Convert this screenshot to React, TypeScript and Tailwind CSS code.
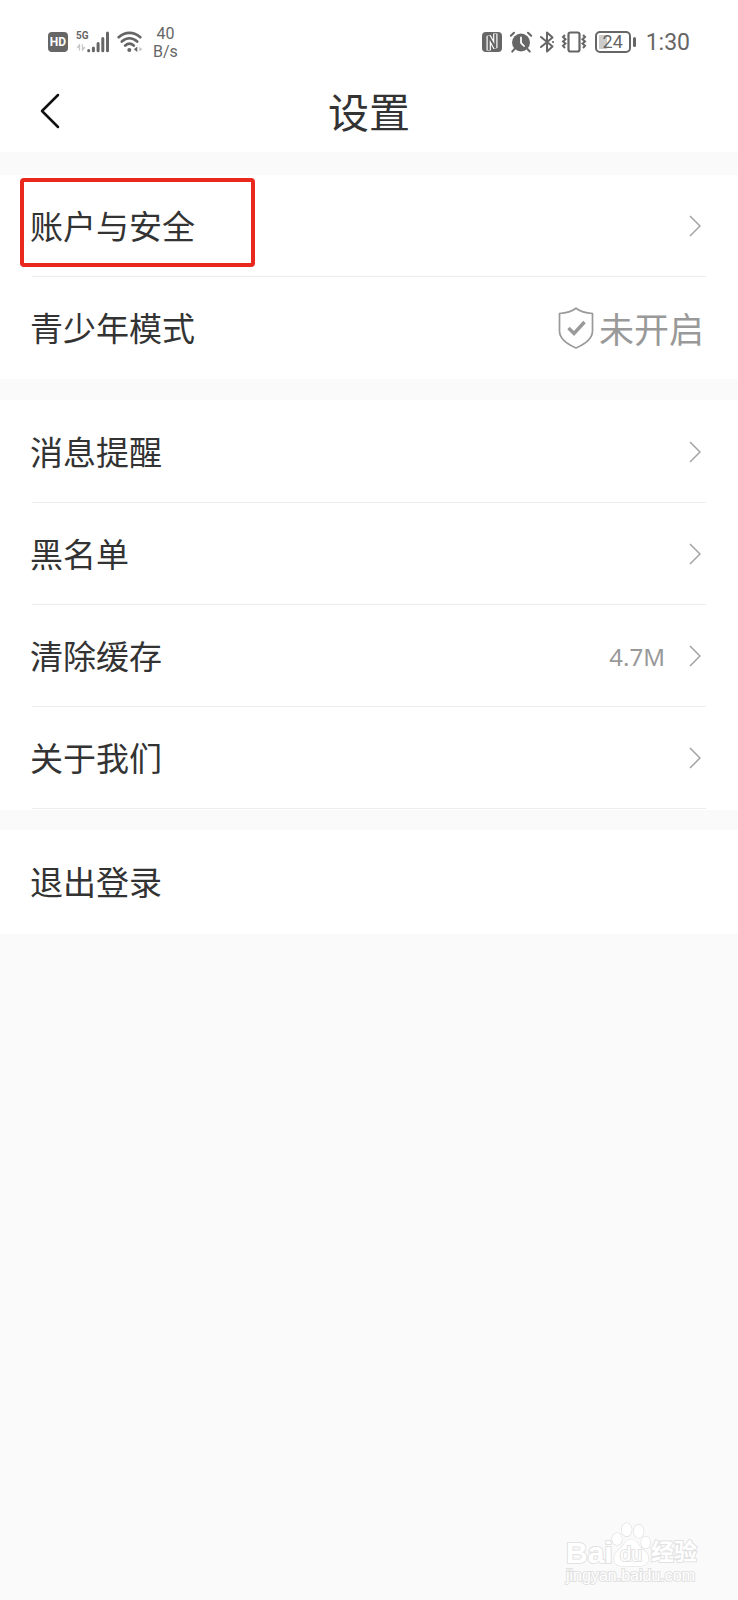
import type { ReactNode } from "react";

function Chevron() {
  return (
    <svg className="h-[22px] w-3 shrink-0" viewBox="0 0 12 22" fill="none" stroke="#a3a3a3" strokeWidth="1.5" aria-hidden="true">
      <path d="M1 1 L11 11 L1 21" />
    </svg>
  );
}

function Row({
  label,
  children,
  divider = false,
  marked = false,
}: {
  label: string;
  children?: ReactNode;
  divider?: boolean;
  marked?: boolean;
}) {
  return (
    <li className="relative px-8">
      <button
        type="button"
        className={
          divider
            ? "flex h-[102px] w-full items-center justify-between border-b border-[#ededed] text-left"
            : "flex h-[102px] w-full items-center justify-between text-left"
        }
      >
        <span className="-ml-0.5 pb-0.5 text-[33px] leading-10">{label}</span>
        {children}
      </button>
      {marked && (
        <span className="pointer-events-none absolute left-5 top-[3px] h-[89px] w-[235px] rounded-sm border-4 border-[#e9281e]" />
      )}
    </li>
  );
}

function Arrow({ value }: { value?: string }) {
  return (
    <span className="flex items-center gap-6 pr-[5px] text-[#999999]">
      {value && <span className="pt-0.5 font-['Noto_Sans',sans-serif] text-[24px] leading-8">{value}</span>}
      <Chevron />
    </span>
  );
}

function StatusBar() {
  return (
    <div className="flex h-[74px] items-center justify-between pl-12 pr-12 pt-2.5 font-[Roboto,sans-serif] text-[#666666]">
      <div className="flex items-center">
        <span className="flex size-5 items-center justify-center rounded-[4px] bg-[#666666] text-[12px] font-bold leading-5 text-white">
          HD
        </span>
        <span className="relative ml-2 block h-[22px] w-[34px]">
          <span className="absolute left-0 top-0 text-[10px] font-bold leading-[10px]">5G</span>
          <svg className="h-[22px] w-[34px]" viewBox="0 0 34 22" fill="none" strokeLinecap="round" aria-hidden="true">
            <path d="M3.5 19V14L1.5 16.5M6.5 14V19L8.5 16.5" stroke="#c4c4c4" strokeWidth="1.3" />
            <path d="M12.7 19.7V19.6M17.4 19.7V17M22.1 19.7V12.5M26.8 19.7V7.5M31.5 19.7V2" stroke="#666666" strokeWidth="3" />
          </svg>
        </span>
        <svg className="ml-[7px] h-[22px] w-[26px]" viewBox="0 0 26 22" fill="none" stroke="#666666" strokeWidth="2.7" strokeLinecap="round" aria-hidden="true">
          <path d="M1.7 6.2C8 .3 17 .3 23.3 6.2" />
          <path d="M4.8 10.6C9.5 6.2 15.5 6.2 20.2 10.6" />
          <path d="M8.2 14.6C11 12 14 12 16.8 14.6" />
          <circle cx="12.3" cy="19" r="2" fill="#666666" stroke="none" />
          <path d="M20.3 15.5V21L16.8 18.2Z" fill="#666666" stroke="none" />
          <path d="M22.3 15.8V20.6L25.4 18.2Z" fill="#c4c4c4" stroke="none" />
        </svg>
        <span className="ml-2.5 pt-0.5 text-center text-[16px] leading-[18px]">
          40
          <br />
          B/s
        </span>
      </div>
      <div className="flex items-center">
        <svg className="h-[22px] w-[22px]" viewBox="0 0 22 22" fill="none" aria-hidden="true">
          <rect x="1" y="1" width="20" height="20" rx="4" fill="#666666" />
          <path d="M7.7 19.5V5L14.3 17V2.5" stroke="#ffffff" strokeWidth="4.4" />
          <path d="M7.7 19V5L14.3 17V3" stroke="#666666" strokeWidth="2" />
        </svg>
        <svg className="ml-1.5 h-[22px] w-6" viewBox="0 0 24 22" fill="none" stroke="#666666" strokeLinecap="round" aria-hidden="true">
          <circle cx="12" cy="11.5" r="9" fill="#666666" stroke="none" />
          <path d="M1.8 4.8L5 1.8M22.2 4.8L19 1.8" strokeWidth="2" />
          <path d="M5.5 18L3.2 20.6M18.5 18L20.8 20.6" strokeWidth="2" />
          <path d="M12 6.5V11.8L15 15" stroke="#ffffff" strokeWidth="1.8" />
        </svg>
        <svg className="ml-1.5 h-[22px] w-4" viewBox="0 0 16 22" fill="none" stroke="#666666" strokeWidth="2" strokeLinejoin="round" strokeLinecap="round" aria-hidden="true">
          <path d="M2 6L13.5 15.5L8 20.5V1.5L13.5 6.5L2 16" />
          <circle cx="14" cy="11" r="1.1" fill="#666666" stroke="none" />
        </svg>
        <svg className="ml-1.5 h-[22px] w-[26px]" viewBox="0 0 26 22" fill="none" stroke="#666666" strokeWidth="2.2" aria-hidden="true">
          <rect x="7.5" y="1.5" width="11" height="19" rx="2" />
          <path d="M4 4L2 6L4.500 8.2L2 10.4L4.500 12.6L2 14.8L4 17" strokeWidth="2" />
          <path d="M22 4L24 6L21.500 8.2L24 10.4L21.500 12.6L24 14.8L22 17" strokeWidth="2" />
        </svg>
        <span className="relative ml-2 flex h-[22px] w-9 items-center justify-center rounded-[5px] border-2 border-[#666666] text-[18px] leading-5">
          <span className="absolute left-0.5 top-0.5 h-3.5 w-2 bg-[#cccccc]" />
          <span className="relative">24</span>
        </span>
        <span className="ml-0.5 h-2.5 w-[3px] rounded-sm bg-[#666666]" />
        <span className="ml-2.5 pt-0.5 text-[23px] leading-8">1:30</span>
      </div>
    </div>
  );
}

function Watermark() {
  return (
    <div className="absolute bottom-4 right-[38px] w-[134px] font-['Liberation_Sans','Noto_Sans_CJK_SC',sans-serif] text-white [-webkit-text-stroke:2px_#e2e2e2] [paint-order:stroke_fill]">
      <div className="flex h-[46px] items-end">
        <span className="w-[45px] text-[30px] font-bold leading-[30px]">Bai</span>
        <span className="relative h-[46px] w-10">
          <svg className="h-[46px] w-10" viewBox="0 0 40 46" fill="#ffffff" stroke="#dedede" strokeWidth="1.2" aria-hidden="true">
            <ellipse cx="6" cy="17" rx="5" ry="6" />
            <ellipse cx="15.7" cy="7.7" rx="5" ry="6.6" />
            <ellipse cx="27.7" cy="9.3" rx="5" ry="6.6" />
            <ellipse cx="34.7" cy="20.500" rx="4.6" ry="6" />
            <path d="M20 17.500C24 17.500 26 20 28.500 24C31 28 37.500 30 37.500 36.500C37.500 41.500 33.500 44 29 44H11C6 44 2.500 41 3 36C3.500 30 9 28 12 23.500C14 20 16 17.500 20 17.500Z" />
          </svg>
          <span className="absolute inset-x-0 bottom-1 text-center text-[20px] leading-5">du</span>
        </span>
        <span className="text-[23px] font-bold leading-8">经验</span>
      </div>
      <div className="text-[16px] leading-4">jingyan.baidu.com</div>
    </div>
  );
}

export default function App() {
  return (
    <div className="relative min-h-screen bg-[#fafafa] font-['Noto_Sans_CJK_SC',sans-serif] text-[#333333]">
      <div className="bg-white">
        <StatusBar />
        <header className="grid h-[78px] grid-cols-[1fr_auto_1fr] items-center px-10 pb-1">
          <button type="button" aria-label="返回" className="justify-self-start">
            <svg className="h-9 w-5" viewBox="0 0 20 36" fill="none" stroke="#111111" strokeWidth="2.5" strokeLinecap="round" strokeLinejoin="round" aria-hidden="true">
              <path d="M18 2 L2 18 L18 34" />
            </svg>
          </button>
          <h1 className="pb-0.5 text-[41px] leading-[52px]">设置</h1>
        </header>
      </div>
      <main className="pt-[23px]">
        <ul className="bg-white">
          <Row label="账户与安全" divider marked>
            <Arrow />
          </Row>
          <Row label="青少年模式">
            <span className="flex items-center gap-[5px] pr-0.5 text-[35px] leading-10 text-[#999999]">
              <svg className="h-[42px] w-9" viewBox="0 0 36 42" fill="none" stroke="#999999" aria-hidden="true">
                <path d="M18 1.200C13 5 8 6 1.500 6.500V24C1.500 32 10 37.500 18 41C26 37.500 34.500 32 34.500 24V6.500C28 6 23 5 18 1.200Z" strokeWidth="1.7" strokeLinejoin="round" />
                <path d="M10.500 21L16 26.500L26.500 15" strokeWidth="3.4" />
              </svg>
              <span>未开启</span>
            </span>
          </Row>
        </ul>
        <ul className="mt-[21px] bg-white py-px">
          <Row label="消息提醒" divider>
            <Arrow />
          </Row>
          <Row label="黑名单" divider>
            <Arrow />
          </Row>
          <Row label="清除缓存" divider>
            <Arrow value="4.7M" />
          </Row>
          <Row label="关于我们" divider>
            <Arrow />
          </Row>
        </ul>
        <ul className="mt-5 bg-white py-px">
          <Row label="退出登录" />
        </ul>
      </main>
      <Watermark />
    </div>
  );
}
